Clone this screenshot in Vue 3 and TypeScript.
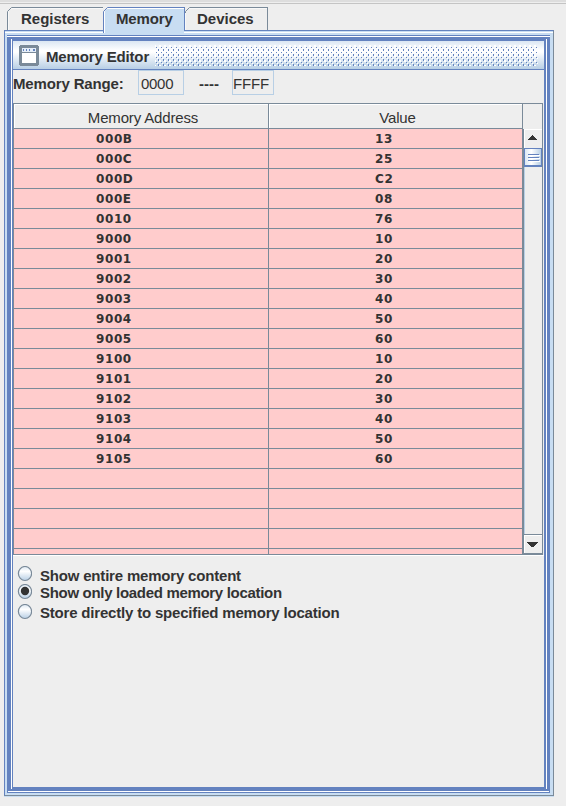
<script setup lang="ts">
import { ref } from 'vue'

interface MemoryCell {
  address: string
  value: string
}

const tabs = ['Registers', 'Memory', 'Devices']
const activeTab = ref('Memory')

const cells: MemoryCell[] = [
  { address: '000B', value: '13' },
  { address: '000C', value: '25' },
  { address: '000D', value: 'C2' },
  { address: '000E', value: '08' },
  { address: '0010', value: '76' },
  { address: '9000', value: '10' },
  { address: '9001', value: '20' },
  { address: '9002', value: '30' },
  { address: '9003', value: '40' },
  { address: '9004', value: '50' },
  { address: '9005', value: '60' },
  { address: '9100', value: '10' },
  { address: '9101', value: '20' },
  { address: '9102', value: '30' },
  { address: '9103', value: '40' },
  { address: '9104', value: '50' },
  { address: '9105', value: '60' },
  { address: '', value: '' },
  { address: '', value: '' },
  { address: '', value: '' },
  { address: '', value: '' },
  { address: '', value: '' },
]

const modes = [
  'Show entire memory content',
  'Show only loaded memory location',
  'Store directly to specified memory location',
]
const mode = ref(1)
</script>

<template>
  <div class="window">
    <div class="strip"></div>
    <nav class="tabs">
      <button
        v-for="tab in tabs"
        :key="tab"
        class="tab"
        :class="[tab.toLowerCase(), { active: tab === activeTab }]"
        @click="activeTab = tab"
      >
        <svg class="notch" width="6" height="6" viewBox="0 0 6 6">
          <path class="cut" d="M0 0H6L0 6Z" />
          <path class="edge" d="M.5 6V4.5L4.5 .5H6" />
        </svg>
        <span>{{ tab }}</span>
      </button>
    </nav>

    <main class="pane">
      <div class="pane-top"></div>
      <section class="frame">
        <header class="title">
          <svg class="app-icon" width="20" height="21" viewBox="0 0 20 21" shape-rendering="crispEdges">
            <path d="M1 0H19V1H20V20H19V21H1V20H0V1H1Z" fill="#7a8a99" />
            <path d="M3 8H17V18H3Z" fill="#fff" />
            <path d="M3 3H17V7H3Z" fill="#e4edf8" />
            <path d="M4 4H5V6H4ZM7 4H8V6H7ZM10 4H11V6H10ZM14 4H16V6H14Z" fill="#6382bf" />
          </svg>
          <h1>Memory Editor</h1>
          <svg class="bumps" width="383" height="21" shape-rendering="crispEdges">
            <defs>
              <pattern id="bumps" width="5" height="5" patternUnits="userSpaceOnUse">
                <path d="M4 0H5V2H4ZM0 0H1V2H0ZM2 3H3V4H2Z" fill="#fff" />
              </pattern>
              <pattern id="dots" width="5" height="5" y="2" patternUnits="userSpaceOnUse">
                <path d="M1 0H2V1H1ZM3 2H4V4H3Z" fill="#6382bf" />
              </pattern>
            </defs>
            <rect width="383" height="21" fill="url(#bumps)" />
            <rect y="2" width="383" height="19" fill="url(#dots)" />
          </svg>
        </header>

        <div class="range">
          <label>Memory Range:</label>
          <span class="field from">0000</span>
          <span class="dash">----</span>
          <span class="field to">FFFF</span>
        </div>

        <div class="table-wrap">
          <div class="table">
            <div class="grid">
              <div class="row head">
                <div class="cell"><span>Memory Address</span></div>
                <div class="cell"><span>Value</span></div>
              </div>
              <div class="rows">
                <div v-for="(cell, i) in cells" :key="i" class="row">
                  <div class="cell">{{ cell.address }}</div>
                  <div class="cell">{{ cell.value }}</div>
                </div>
              </div>
            </div>
            <div class="side">
              <div class="corner"></div>
              <div class="scrollbar">
                <div class="arrow up">
                  <svg width="11" height="6" viewBox="0 0 11 6" shape-rendering="crispEdges">
                    <path d="M5 0H6V1H7V2H8V3H9V4H10V5H1V4H2V3H3V2H4V1H5Z" />
                  </svg>
                </div>
                <div class="thumb"><i></i><i></i><i></i></div>
                <div class="track"></div>
                <div class="arrow down">
                  <svg width="11" height="6" viewBox="0 0 11 6" shape-rendering="crispEdges">
                    <path d="M0 0H11V1H10V2H9V3H8V4H7V5H4V4H3V3H2V2H1V1H0Z" />
                  </svg>
                </div>
              </div>
            </div>
          </div>
        </div>

        <div class="modes">
          <div v-for="(label, i) in modes" :key="label" class="mode" @click="mode = i">
            <svg width="15" height="16" viewBox="0 0 15 16">
              <defs>
                <linearGradient id="ball" x1="0" y1="0" x2="0" y2="1">
                  <stop offset="0" stop-color="#dde8f3" />
                  <stop offset=".35" stop-color="#fff" />
                  <stop offset="1" stop-color="#b8cfe5" />
                </linearGradient>
              </defs>
              <ellipse cx="8" cy="7.5" rx="6.6" ry="7" fill="url(#ball)" stroke="#7a8a99" stroke-width="1.2" />
              <circle v-if="mode === i" cx="8" cy="7" r="4.2" fill="#333" />
            </svg>
            <span>{{ label }}</span>
          </div>
        </div>
      </section>
    </main>
  </div>
</template>

<style>
body {
  background: #eee;
}
</style>

<style scoped>
.window {
  box-sizing: border-box;
  width: 566px;
  height: 806px;
  background: #eee;
  color: #333;
  font: bold 15px/18px "Liberation Sans", sans-serif;
  overflow: hidden;
}
.strip {
  height: 2px;
  background: #ddd;
  border-bottom: 1px solid #eee;
  box-shadow: 0 1px #c4c4c4;
}
.tabs {
  display: flex;
  height: 23px;
  padding: 4px 0 0 7px;
}
.tab {
  position: relative;
  display: flex;
  align-items: flex-start;
  box-sizing: border-box;
  height: 23px;
  padding: 2px 0 0;
  border: solid #7a8a99;
  border-width: 1px 0 0 1px;
  background: #eee;
  color: inherit;
  font: inherit;
  box-shadow: inset 1px 1px #f8f8f8;
}
.tab.registers { width: 96px; padding-left: 13px; }
.tab.memory { width: 81px; padding-left: 12px; letter-spacing: -.15px; }
.tab.devices { width: 84px; padding-left: 12px; border-right-width: 1px; border-left-color: #6382bf; }
.tab.active {
  height: 26px;
  border-color: #6382bf;
  background: #c8ddf2;
  box-shadow: inset 1px 1px #fff;
  z-index: 1;
}
.notch {
  position: absolute;
  left: -1px;
  top: -1px;
}
.cut { fill: #eee; }
.edge { fill: none; stroke: #7a8a99; }
.active .edge { stroke: #6382bf; }
.devices .notch { left: 0; }
.pane {
  box-sizing: border-box;
  width: 550px;
  height: 766px;
  margin-left: 4px;
  border: 1px solid #6382bf;
  border-right-color: #7a8a99;
  border-bottom-color: #7a8a99;
  background: #c8ddf2;
  padding: 0 3px 0 2px;
  box-shadow: 0 1px #c8ddf2;
}
.pane-top {
  height: 4px;
  background: linear-gradient(#c8ddf2 1px, #fff 1px, #fff 2px, #c8ddf2 2px);
  margin: 0 -3px 0 -2px;
}
.frame {
  box-sizing: border-box;
  height: 758px;
  padding: 6px;
  background:
    linear-gradient(#fff, #fff) 0 1px / 100% 1px no-repeat,
    linear-gradient(#fff, #fff) 4px 4px / 1px 750px no-repeat,
    linear-gradient(#fff, #fff) 539px 4px / 1px 750px no-repeat,
    linear-gradient(#fff, #fff) 1px 756px / 541px 1px no-repeat,
    #6382bf;
  display: flex;
  flex-direction: column;
}
.title {
  display: flex;
  height: 29px;
  box-sizing: border-box;
  border-bottom: 1px solid #6382bf;
  background: linear-gradient(#dbe7f3, #fff 34%, #fff 40%, #b8cfe5);
  flex: none;
  padding: 0 0 0 6px;
}
.app-icon { margin-top: 4px; flex: none; }
h1 {
  width: 115px;
  flex: none;
  box-sizing: border-box;
  margin: 7px 0 0;
  padding-left: 7px;
  font: inherit;
  letter-spacing: -.15px;
  white-space: nowrap;
}
.bumps { margin: 4px 0 0 1px; flex: none; }
.range {
  display: flex;
  height: 33px;
  flex: none;
  background: #eee;
}
.range label { width: 125px; padding-top: 5px; letter-spacing: -.15px; }
.field {
  box-sizing: border-box;
  height: 25px;
  padding: 4px 0 0 2px;
  border: 1px solid #b8cfe5;
  font-weight: normal;
}
.from { width: 46px; letter-spacing: -.3px; }
.to { width: 42px; padding-left: 0; letter-spacing: -.2px; }
.dash { width: 48px; padding: 5px 0 0 15px; box-sizing: border-box; }
.table-wrap { background: #eee; flex: none; }
.table {
  display: flex;
  width: 530px;
  height: 452px;
  box-sizing: border-box;
  border: solid #7a8a99;
  border-width: 1px 0 1px 1px;
}
.grid { width: 509px; flex: none; overflow: hidden; }
.row { display: grid; grid-template-columns: 255px 254px; height: 20px; }
.row .cell {
  box-sizing: border-box;
  border: solid #7a8a99;
  border-width: 0 1px 1px 0;
}
.head { height: 25px; font-weight: normal; }
.head .cell { box-shadow: inset 1px 1px #fff; padding-top: 5px; text-align: center; letter-spacing: -.15px; }
.head .cell:first-child span { padding-left: 4px; }
.head .cell:last-child span { padding-left: 4px; }
.rows {
  height: 425px;
  overflow: hidden;
  background: #fcc;
  font: bold 12px/19px "DejaVu Sans", sans-serif;
  letter-spacing: .6px;
}
.rows .cell { padding: 1px 0 0 82px; line-height: 18px; }
.rows .cell + .cell { padding-left: 106px; }
.side { width: 20px; display: flex; flex-direction: column; }
.corner { height: 25px; box-sizing: border-box; border-right: 1px solid #7a8a99; }
.scrollbar {
  flex: 1;
  display: flex;
  flex-direction: column;
  box-sizing: border-box;
  border: solid #7a8a99;
  border-width: 0 1px 1px;
}
.arrow {
  display: flex;
  box-shadow: inset 1px 1px #fff;
  fill: #333;
  padding-left: 3px;
  box-sizing: border-box;
}
.up { height: 19px; padding-top: 6px; }
.down { height: 19px; padding-top: 7px; border-top: 1px solid #7a8a99; }
.thumb {
  height: 19px;
  box-sizing: border-box;
  border: 1px solid #6382bf;
  border-bottom-width: 2px;
  background: linear-gradient(90deg, #dbe7f3, #fff 40%, #b8cfe5);
  padding: 5px 2px 0 3px;
}
.thumb i { display: block; height: 1px; margin-bottom: 2px; background: #6382bf; box-shadow: 1px 1px #fff; }
.track { flex: 1; box-shadow: inset 1px 0 #b8cfe5; }
.modes {
  flex: 1;
  padding: 11px 0 0 4px;
  background: #eee;
  box-shadow: inset 0 1px #fff;
}
.mode { display: flex; height: 18px; letter-spacing: -.19px; }
.mode span { padding: 1px 0 0 8px; }
.mode:nth-child(2) { height: 20px; letter-spacing: -.31px; }
.mode:nth-child(2) span,
.mode:nth-child(3) span { padding-top: 0; }
</style>
